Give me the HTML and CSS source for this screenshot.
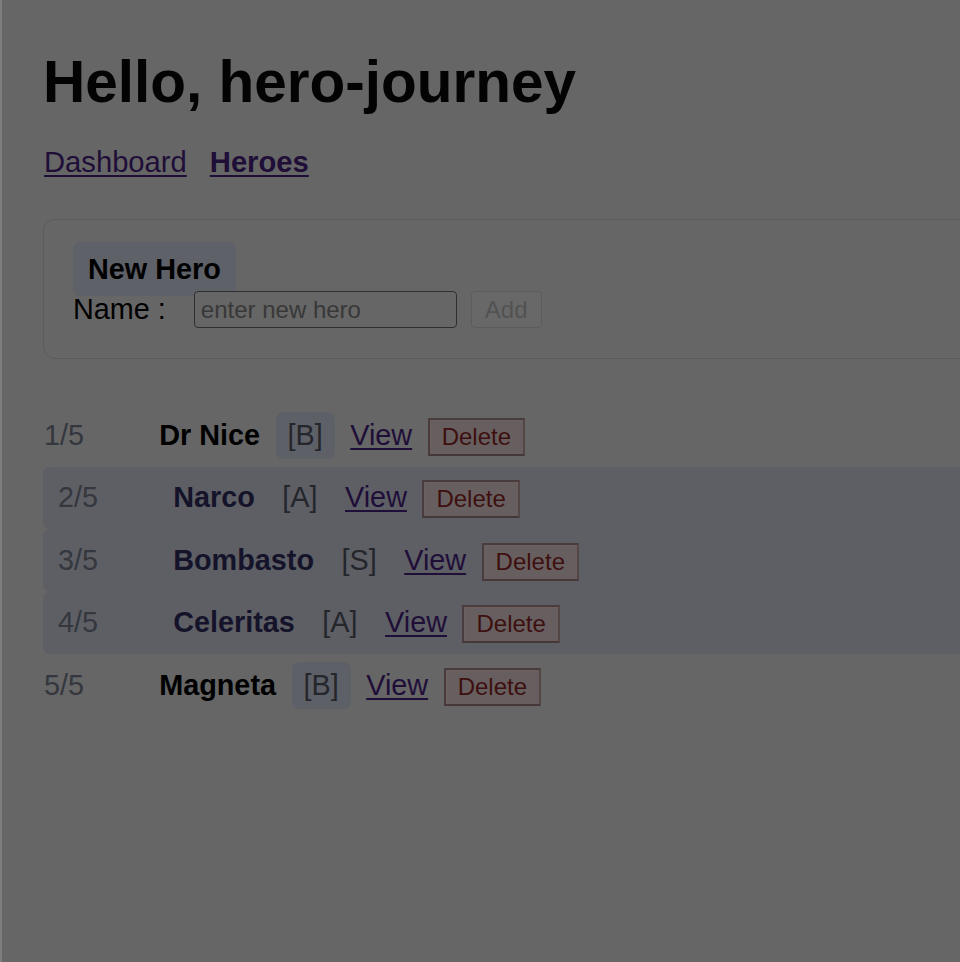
FILE: index.html
```html
<!DOCTYPE html>
<html lang="en">
<head>
<meta charset="utf-8">
<title>Tour of Heroes</title>
<link rel="stylesheet" href="styles.css">
</head>
<body>
<div class="app">
  <h1 class="title">Hello, hero-journey</h1>
  <nav class="nav">
    <a href="#" class="nav-link">Dashboard</a>
    <a href="#" class="nav-link nav-link-active">Heroes</a>
  </nav>

  <section class="card">
    <div class="card-title">New Hero</div>
    <div class="form-row">
      <label class="form-label" for="hero-name">Name :</label>
      <input id="hero-name" class="form-input" type="text" placeholder="enter new hero">
      <button class="btn-add" disabled>Add</button>
    </div>
  </section>

  <ul class="hero-list">
    <li class="hero">
      <span class="hero-index">1/5</span>
      <span class="hero-name">Dr Nice</span>
      <span class="hero-rank rank-b">[B]</span>
      <a href="#" class="hero-view">View</a>
      <button class="btn-delete">Delete</button>
    </li>
    <li class="hero hero-hl">
      <span class="hero-index">2/5</span>
      <span class="hero-name">Narco</span>
      <span class="hero-rank">[A]</span>
      <a href="#" class="hero-view">View</a>
      <button class="btn-delete">Delete</button>
    </li>
    <li class="hero hero-hl">
      <span class="hero-index">3/5</span>
      <span class="hero-name">Bombasto</span>
      <span class="hero-rank">[S]</span>
      <a href="#" class="hero-view">View</a>
      <button class="btn-delete">Delete</button>
    </li>
    <li class="hero hero-hl">
      <span class="hero-index">4/5</span>
      <span class="hero-name">Celeritas</span>
      <span class="hero-rank">[A]</span>
      <a href="#" class="hero-view">View</a>
      <button class="btn-delete">Delete</button>
    </li>
    <li class="hero">
      <span class="hero-index">5/5</span>
      <span class="hero-name">Magneta</span>
      <span class="hero-rank rank-b">[B]</span>
      <a href="#" class="hero-view">View</a>
      <button class="btn-delete">Delete</button>
    </li>
  </ul>
</div>
</body>
</html>
```
FILE: styles.css
```css
html {
  overflow: hidden;
  background: #666666;
}

body {
  margin: 0;
  min-height: 962px;
  background: #666666;
  border-left: 2px solid #7e7e7e;
  font-family: "Liberation Sans", Arial, sans-serif;
  font-size: 28.8px;
  color: #000;
}

.app {
  width: 1100px;
  padding: 49px 0 0 41px;
}

.title {
  margin: 0;
  font-size: 58.5px;
  font-weight: bold;
  line-height: 66px;
  color: #030303;
}

.nav {
  display: flex;
  gap: 23px;
  margin-top: 31px;
  line-height: 33px;
  padding-left: 1px;
  font-size: 29.2px;
}

.nav-link {
  color: #1f0e38;
  text-decoration: underline;
  text-decoration-thickness: 2px;
  text-underline-offset: 3px;
}

.nav-link-active {
  font-weight: bold;
}

.card {
  margin-top: 40px;
  border: 1px solid #5b5b5b;
  border-radius: 12px;
  padding: 22px 29px 30px;
}

.card-title {
  display: inline-block;
  padding: 10px 15px;
  line-height: 34px;
  font-weight: bold;
  background: #5f6168;
  border-radius: 7px;
}

.form-row {
  display: flex;
  align-items: center;
  margin-top: -5px;
}

.form-label {
  margin-right: 28px;
  line-height: 33px;
}

.form-input {
  box-sizing: border-box;
  width: 263px;
  height: 37px;
  padding: 0 6px;
  margin: 0;
  font-family: "Liberation Sans", Arial, sans-serif;
  font-size: 24px;
  background: #666666;
  border: 1.5px solid #2f2f2f;
  border-radius: 4px;
  color: #000;
}

.form-input::placeholder {
  color: #383838;
}

.btn-add {
  box-sizing: border-box;
  height: 37px;
  margin-left: 14px;
  padding: 0 13px;
  font-family: "Liberation Sans", Arial, sans-serif;
  font-size: 24px;
  color: #525252;
  background: #686868;
  border: 1px solid #5c5c5c;
  border-radius: 4px;
}

.hero-list {
  list-style: none;
  margin: 45px 0 0;
  padding: 0;
}

.hero {
  display: flex;
  align-items: baseline;
  gap: 15.5px;
  padding: 7.75px 0 7.75px 1px;
  line-height: 33px;
}

.hero-hl {
  padding-left: 15px;
  background: #5e5f65;
  border-radius: 7px 0 0 7px;
}

.hero-index {
  flex: 0 0 99.7px;
  color: #34373e;
}

.hero-name {
  font-weight: bold;
  color: #000;
}

.hero-hl .hero-name {
  color: #14132a;
}

.hero-rank {
  padding: 7px 12px;
  border-radius: 7px;
  color: #24262c;
}

.rank-b {
  background: #5e6067;
}

.hero-view {
  color: #1f0e38;
  text-decoration: underline;
  text-decoration-thickness: 2px;
  text-underline-offset: 3px;
}

.btn-delete {
  padding: 3px 12px;
  font-family: "Liberation Sans", Arial, sans-serif;
  font-size: 24px;
  line-height: normal;
  color: #3e0f0f;
  background: #675f5f;
  border: 2px solid;
  border-color: #4a3c3c #554646 #463838 #4a3c3c;
  box-shadow: inset 1px 1px 0 #6c6161;
}
```
